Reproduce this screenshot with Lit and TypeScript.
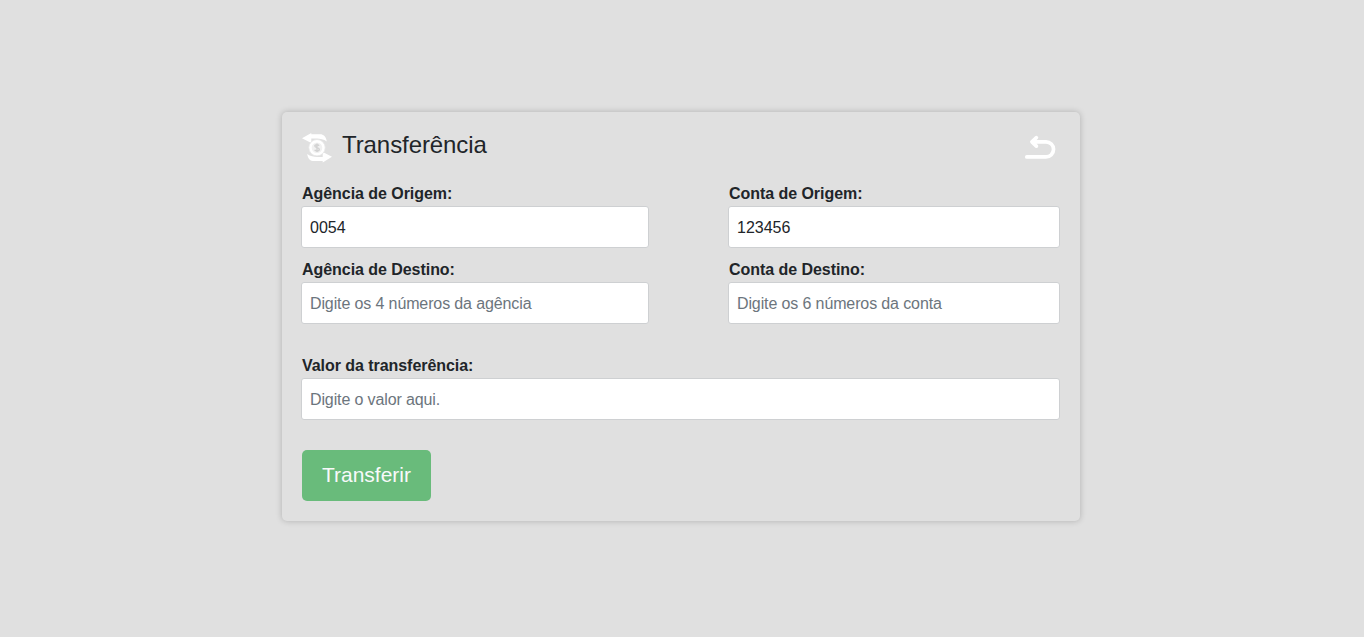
import { LitElement, html, css } from "lit";
import { customElement } from "lit/decorators.js";

@customElement("app-root")
export class AppRoot extends LitElement {
  static styles = css`
    :host {
      display: flex;
      height: 637px;
      box-sizing: border-box;
      padding: 112px 284px 116px 282px;
      background: #e0e0e0;
      color: #212529;
      font: 16px/24px "Liberation Sans", Arial, sans-serif;
    }
    * { box-sizing: border-box; }
    .card {
      flex: 1;
      display: flex;
      flex-direction: column;
      align-items: flex-start;
      padding: 20px;
      border-radius: 5px;
      box-shadow: 0 0 6px rgba(0, 0, 0, 0.22);
    }
    .head {
      display: flex;
      width: 100%;
      height: 49px;
      align-items: flex-start;
    }
    .head svg { display: block; flex: none; }
    .logo { margin: 1px 10px 0 0; }
    h1 {
      flex: 1;
      margin: 0;
      font-size: 24px;
      line-height: 26px;
      font-weight: 400;
      letter-spacing: -0.08px;
    }
    .back { margin: 1px 4px 0 0; }
    .row {
      display: grid;
      grid-template-columns: 348px 332px;
      justify-content: space-between;
      width: 759px;
      margin-left: -1px;
      height: 76px;
    }
    .single { grid-template-columns: 1fr; margin-top: 20px; height: 97px; }
    label { display: block; }
    .name {
      display: block;
      height: 25px;
      padding-left: 1px;
      font-weight: 700;
      line-height: 25px;
      letter-spacing: -0.05px;
    }
    input {
      display: block;
      width: 100%;
      height: 42px;
      padding: 2px 8px 0;
      border: 1px solid #ced0d2;
      border-radius: 3px;
      background: #fff;
      color: #212529;
      font: inherit;
    }
    input::placeholder { color: #6c757d; opacity: 1; letter-spacing: -0.12px; }
    button {
      width: 129px;
      height: 51px;
      padding: 0 0 2px;
      border: 0;
      border-radius: 5px;
      background: #69bb7b;
      color: #f8f9fa;
      font: 21px/49px "Liberation Sans", Arial, sans-serif;
    }
  `;

  private field(name: string, value: string, placeholder = "") {
    return html`<label><span class="name">${name}</span
      ><input .value=${value} placeholder=${placeholder} /></label>`;
  }

  render() {
    return html`
      <section class="card">
        <div class="head">
          <svg class="logo" width="30" height="30" viewBox="0 0 30 30">
            <path fill="#fff" d="M0 5.300 9.300 0v1.300H18c3.600 0 6 2.400 6.800 7.200C21.800 6.300 18 5.500 15 5.500H9.300v4.500zM30 23.800 20.700 29.400v-1.300H12c-3.600 0-6-2.400-6.800-7.200 3 2.300 6.800 3 9.800 3h5.700v-4.800z"/>
            <circle cx="15" cy="14.700" r="8.200" fill="#fff" stroke="#e6e6e6" stroke-width=".8"/>
            <circle cx="15" cy="14.700" r="5.300" fill="#f1f1f1"/>
            <path d="M17.100 12.700c-.6-.7-1.200-1-2.100-1-1.300 0-2.200.5-2.200 1.400 0 2.100 4.500 1 4.500 3.200 0 1-1 1.600-2.300 1.600-1 0-1.900-.4-2.400-1M15 10.500v8.600" fill="none" stroke="#d2d2d2" stroke-width="1.400"/>
          </svg>
          <h1>Transferência</h1>
          <svg class="back" width="32" height="30" viewBox="0 0 32 30">
            <path d="M2.800 23.900H22a7.550 7.550 0 0 0 0-15.100H8M12.400 4.700 7.900 8.800l4.500 4.300" fill="none" stroke="#fff" stroke-width="3.700" stroke-linecap="round" stroke-linejoin="round"/>
          </svg>
        </div>
        <div class="row">
          ${this.field("Agência de Origem:", "0054")}
          ${this.field("Conta de Origem:", "123456")}
        </div>
        <div class="row">
          ${this.field("Agência de Destino:", "", "Digite os 4 números da agência")}
          ${this.field("Conta de Destino:", "", "Digite os 6 números da conta")}
        </div>
        <div class="row single">
          ${this.field("Valor da transferência:", "", "Digite o valor aqui.")}
        </div>
        <button type="button">Transferir</button>
      </section>
    `;
  }
}
